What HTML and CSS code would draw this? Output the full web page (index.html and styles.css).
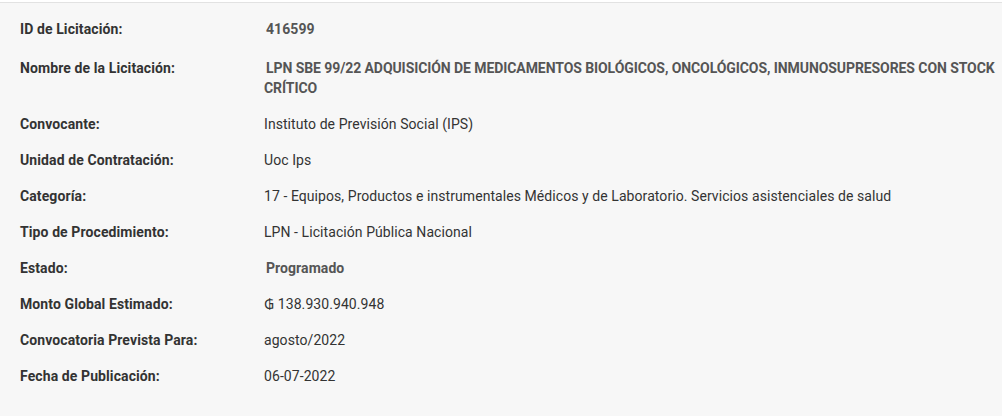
FILE: index.html
```html
<!DOCTYPE html>
<html lang="es">
<head>
<meta charset="utf-8">
<title>Licitación 416599</title>
<link rel="stylesheet" href="styles.css">
</head>
<body>
<div class="panel">
  <dl class="details">
    <div class="row row-first">
      <dt>ID de Licitación:</dt>
      <dd class="strong">416599</dd>
    </div>
    <div class="row">
      <dt>Nombre de la Licitación:</dt>
      <dd class="strong caps">LPN SBE 99/22 ADQUISICIÓN DE MEDICAMENTOS BIOLÓGICOS, ONCOLÓGICOS, INMUNOSUPRESORES CON STOCK CRÍTICO</dd>
    </div>
    <div class="row">
      <dt>Convocante:</dt>
      <dd>Instituto de Previsión Social (IPS)</dd>
    </div>
    <div class="row">
      <dt>Unidad de Contratación:</dt>
      <dd>Uoc Ips</dd>
    </div>
    <div class="row">
      <dt>Categoría:</dt>
      <dd>17 - Equipos, Productos e instrumentales Médicos y de Laboratorio. Servicios asistenciales de salud</dd>
    </div>
    <div class="row">
      <dt>Tipo de Procedimiento:</dt>
      <dd>LPN - Licitación Pública Nacional</dd>
    </div>
    <div class="row">
      <dt>Estado:</dt>
      <dd class="strong">Programado</dd>
    </div>
    <div class="row">
      <dt>Monto Global Estimado:</dt>
      <dd>₲ 138.930.940.948</dd>
    </div>
    <div class="row">
      <dt>Convocatoria Prevista Para:</dt>
      <dd>agosto/2022</dd>
    </div>
    <div class="row">
      <dt>Fecha de Publicación:</dt>
      <dd>06-07-2022</dd>
    </div>
  </dl>
</div>
</body>
</html>
```

FILE: styles.css
```css
html, body {
  margin: 0;
  padding: 0;
  background: #ffffff;
}

body {
  padding-top: 2px;
  font-family: "Roboto", "Noto Sans", sans-serif;
  font-size: 14px;
  color: #333333;
}

.panel {
  background: #f7f7f7;
  border-top: 1px solid #e2e2e2;
  min-height: 414px;
  box-sizing: border-box;
  padding: 8px 6px 20px 20px;
}

.details {
  margin: 0;
}

.row {
  display: grid;
  grid-template-columns: 244px 1fr;
  padding: 8px 0;
  line-height: 20px;
}

.row-first {
  padding-bottom: 11px;
}

.row dt {
  font-weight: 700;
  color: #333333;
  letter-spacing: 0.1px;
}

.row dd {
  margin: 0;
  color: #333333;
  letter-spacing: 0.07px;
}

.row dd.strong {
  font-weight: 700;
  color: #555555;
  text-indent: 2px;
}

.row dd.caps {
  letter-spacing: -0.08px;
}
```
